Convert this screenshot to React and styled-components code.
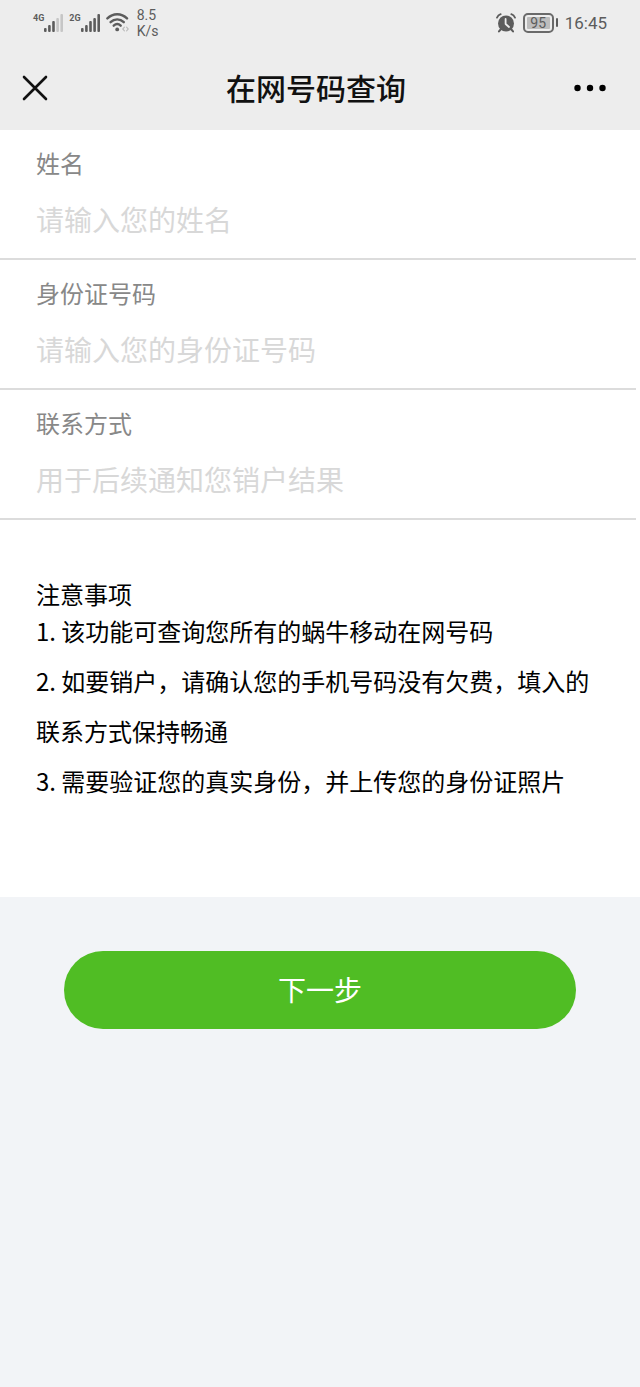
import React, { useState } from 'react'
import styled, { createGlobalStyle } from 'styled-components'

const GlobalStyle = createGlobalStyle`
  * {
    box-sizing: border-box;
  }

  body {
    margin: 0;
    background-color: #f2f4f7;
    color: #111;
    font-family: "Noto Sans CJK SC", sans-serif;
  }
`

const Header = styled.header`
  background-color: #ededed;
`

const StatusBar = styled.div`
  display: flex;
  justify-content: space-between;
  height: 45px;
  padding: 0 33px;
  color: #5c5c5c;
  font-family: Roboto, sans-serif;
`

const StatusGroup = styled.div`
  display: flex;
  align-items: center;
  gap: ${props => props.$gap}px;
`

const Signal = styled.div`
  display: flex;
  align-items: flex-start;
`

const Network = styled.span`
  font-size: 9px;
  font-weight: bold;
  line-height: 9px;
`

const Speed = styled.span`
  margin-left: 3px;
  font-size: 14px;
  line-height: 16px;
`

const Battery = styled.span`
  display: flex;
  align-items: center;
  gap: 2px;

  &::after {
    content: "";
    width: 2px;
    height: 9px;
    border-radius: 1px;
    background-color: #5c5c5c;
  }
`

const BatteryLevel = styled.span`
  width: 31px;
  height: 20px;
  padding: 2px;
  border: 2px solid #6a6a6a;
  border-radius: 5px;
  background-color: #bdbdbd;
  background-clip: content-box;
  font-size: 14px;
  line-height: 12px;
  text-align: center;
`

const Time = styled.span`
  font-size: 17px;
  line-height: 24px;
`

const NavBar = styled.nav`
  display: grid;
  grid-template-columns: 70px 1fr 78px;
  align-items: center;
  height: 85px;
`

const Title = styled.h1`
  margin: 0;
  padding-bottom: 2px;
  font-size: 30px;
  font-weight: 500;
  line-height: 42px;
  text-align: center;
`

const IconButton = styled.button`
  display: flex;
  align-items: center;
  justify-content: center;
  height: 44px;
  padding: 0;
  border: 0;
  background: none;
  color: #111;
`

const MoreButton = styled(IconButton)`
  padding-right: 22px;
`

const Panel = styled.div`
  background-color: #fff;
`

const Field = styled.div`
  margin-right: 4px;
  padding: 15px 0 1px 36px;
  border-bottom: 2px solid #dcdcdc;
`

const Label = styled.label`
  display: block;
  color: #888;
  font-size: 24px;
  line-height: 36px;
`

const Input = styled.input`
  display: block;
  width: 100%;
  height: 76px;
  padding: 0;
  border: 0;
  outline: 0;
  background: none;
  color: #111;
  font-family: inherit;
  font-size: 28px;

  &::placeholder {
    color: #d8d8d8;
  }
`

const Notes = styled.section`
  padding: 61px 36px 91px;
  color: #000;
  font-size: 24px;
`

const NotesTitle = styled.h2`
  margin: 0;
  font-size: 24px;
  font-weight: normal;
  line-height: 25px;
`

const NotesList = styled.ol`
  margin: 0;
  padding: 0;
  list-style: none;
  line-height: 50px;
`

const Actions = styled.div`
  padding: 54px 10%;
`

const NextButton = styled.button`
  width: 100%;
  height: 78px;
  padding: 0 0 2px;
  border: 0;
  border-radius: 39px;
  background-color: #50bd24;
  color: #fff;
  font-family: inherit;
  font-size: 28px;
`

const bars = [4, 7, 11, 14, 18]

const SignalBars = ({ level }) => (
  <svg width="20" height="18" viewBox="0 0 20 18" aria-hidden="true">
    {
      bars.map((height, i) =>
        <rect
          key={height}
          x={i * 4.1}
          y={18 - height}
          width="2.6"
          height={height}
          rx="1"
          fill={i < level ? '#5c5c5c' : '#c6c6c6'}
        />
      )
    }
  </svg>
)

const WifiIcon = () => (
  <svg width="23" height="19" viewBox="0 0 23 19" fill="none" stroke="#5c5c5c" strokeWidth="2.4" strokeLinecap="round" aria-hidden="true">
    <path d="M1.4 5.4C7-.2 15.4-.2 21 5.4" />
    <path d="M4.6 9.2C8.4 5.4 14 5.4 17.8 9.2" />
    <path d="M7.7 12.7C9.8 10.7 12.6 10.7 14.7 12.7" />
    <circle cx="11.2" cy="16.4" r="1.9" fill="#5c5c5c" stroke="none" />
    <path d="M18.4 14.2 16.8 16l1.6 1.8M20.6 14.2 22.2 16l-1.6 1.8" stroke="#bdbdbd" strokeWidth="1.2" />
  </svg>
)

const AlarmIcon = () => (
  <svg width="20" height="20" viewBox="0 0 20 20" fill="none" strokeLinecap="round" aria-hidden="true">
    <circle cx="10" cy="10.5" r="8" fill="#5c5c5c" />
    <path d="M1 4.6C1.7 3 3 1.8 4.7 1.2M19 4.6C18.3 3 17 1.8 15.3 1.2" stroke="#5c5c5c" strokeWidth="1.8" />
    <path d="M4.6 16.5 3 18.4M15.4 16.5 17 18.4" stroke="#5c5c5c" strokeWidth="2" />
    <path d="M9.6 6V11L13 14" stroke="#ededed" strokeWidth="1.8" strokeLinejoin="round" />
  </svg>
)

const CloseIcon = () => (
  <svg width="26" height="26" viewBox="0 0 26 26" stroke="currentColor" strokeWidth="2.6" strokeLinecap="round" aria-hidden="true">
    <path d="M2 2 24 24M24 2 2 24" />
  </svg>
)

const MoreIcon = () => (
  <svg width="34" height="8" viewBox="0 0 34 8" fill="#000" aria-hidden="true">
    <circle cx="4.5" cy="4" r="3.2" />
    <circle cx="17" cy="4" r="3.2" />
    <circle cx="29.5" cy="4" r="3.2" />
  </svg>
)

const fields = [
  { id: 'name', label: '姓名', placeholder: '请输入您的姓名' },
  { id: 'idNumber', label: '身份证号码', placeholder: '请输入您的身份证号码' },
  { id: 'contact', label: '联系方式', placeholder: '用于后续通知您销户结果' },
]

const notes = [
  '1. 该功能可查询您所有的蜗牛移动在网号码',
  '2. 如要销户，请确认您的手机号码没有欠费，填入的联系方式保持畅通',
  '3. 需要验证您的真实身份，并上传您的身份证照片',
]

const App = () => {
  const [values, setValues] = useState({ name: '', idNumber: '', contact: '' })

  const handleChange = (e) => {
    setValues({ ...values, [e.target.name]: e.target.value })
  }

  return (
    <>
      <GlobalStyle />
      <Header>
        <StatusBar>
          <StatusGroup $gap={5}>
            <Signal>
              <Network>4G</Network>
              <SignalBars level={3} />
            </Signal>
            <Signal>
              <Network>2G</Network>
              <SignalBars level={5} />
            </Signal>
            <WifiIcon />
            <Speed>8.5<br />K/s</Speed>
          </StatusGroup>
          <StatusGroup $gap={7}>
            <AlarmIcon />
            <Battery>
              <BatteryLevel>95</BatteryLevel>
            </Battery>
            <Time>16:45</Time>
          </StatusGroup>
        </StatusBar>
        <NavBar>
          <IconButton type="button" aria-label="关闭"><CloseIcon /></IconButton>
          <Title>在网号码查询</Title>
          <MoreButton type="button" aria-label="更多"><MoreIcon /></MoreButton>
        </NavBar>
      </Header>
      <main>
        <Panel>
          {
            fields.map(field =>
              <Field key={field.id}>
                <Label htmlFor={field.id}>{field.label}</Label>
                <Input
                  id={field.id}
                  name={field.id}
                  placeholder={field.placeholder}
                  value={values[field.id]}
                  onChange={handleChange}
                />
              </Field>
            )
          }
          <Notes>
            <NotesTitle>注意事项</NotesTitle>
            <NotesList>
              {notes.map(note => <li key={note}>{note}</li>)}
            </NotesList>
          </Notes>
        </Panel>
        <Actions>
          <NextButton type="button">下一步</NextButton>
        </Actions>
      </main>
    </>
  )
}

export default App
